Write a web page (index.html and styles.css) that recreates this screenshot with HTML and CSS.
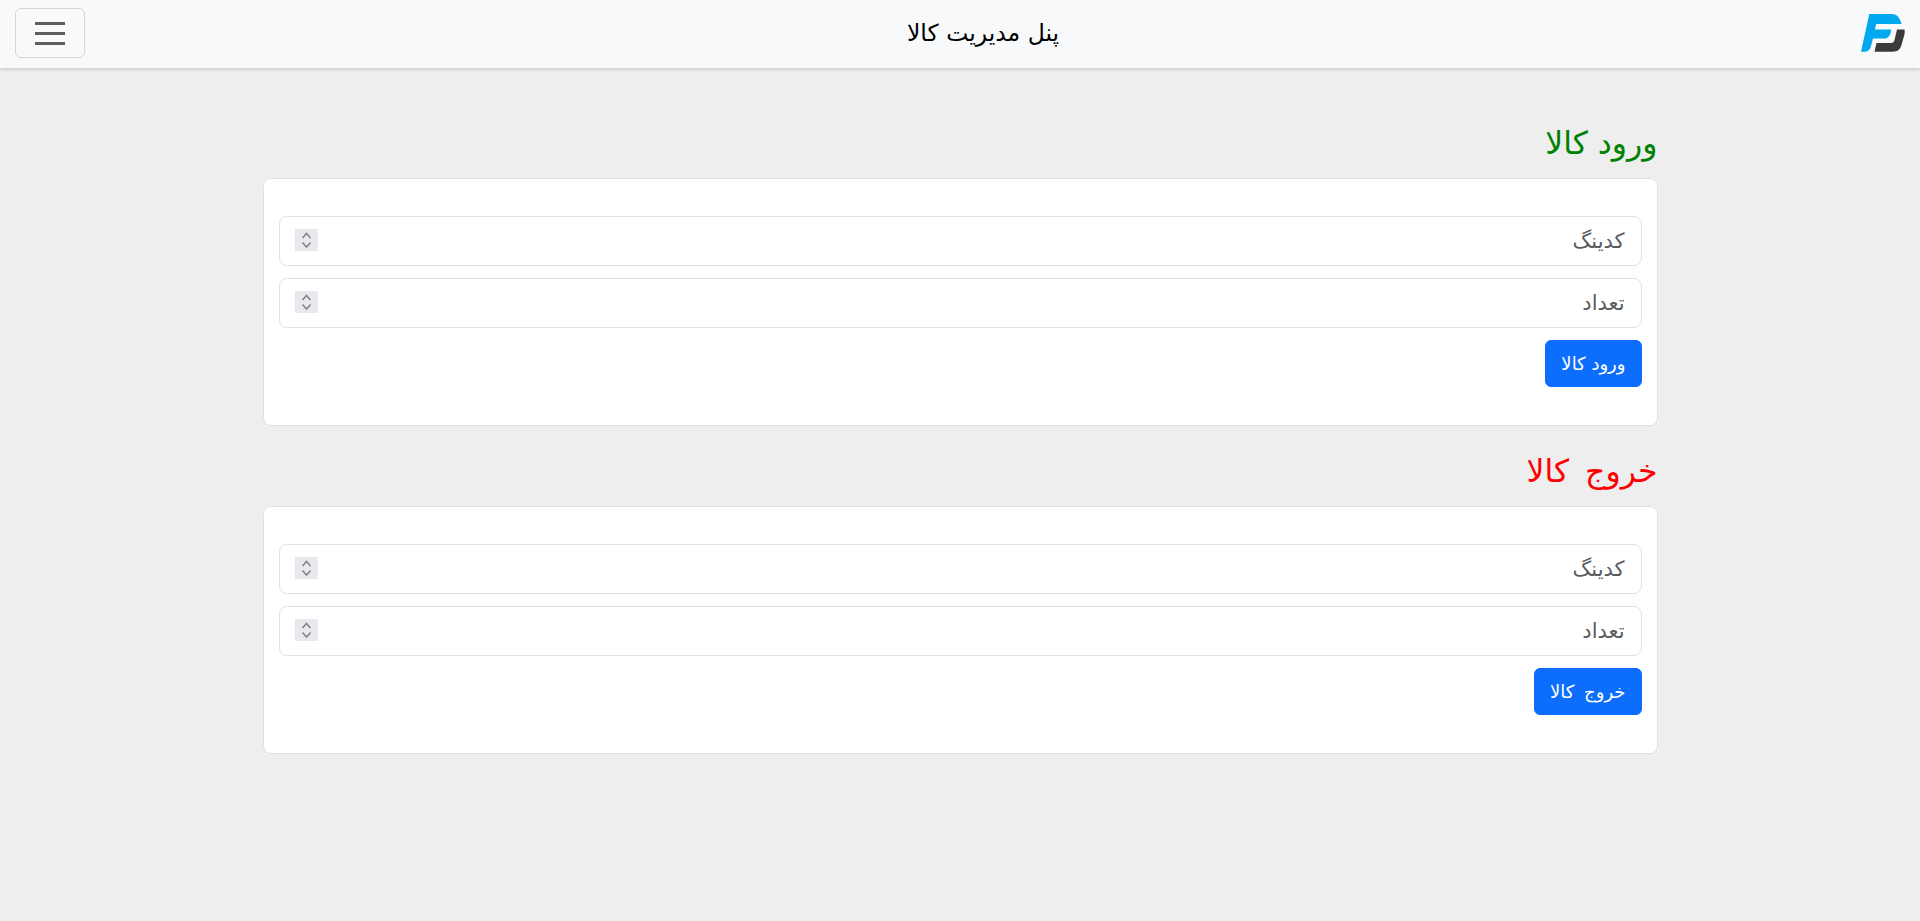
FILE: index.html
```html
<!DOCTYPE html>
<html lang="fa" dir="rtl">
<head>
  <meta charset="UTF-8" />
  <meta name="viewport" content="width=device-width, initial-scale=1.0"/>
  <title>پنل مدیریت کالا</title>
  <link rel="stylesheet" href="styles.css">
</head>
<body>
  <nav class="navbar">
    <svg class="logo" viewBox="0 0 44 38" aria-label="logo">
      <path fill="#3b3b3b" d="M36 15.500H43.500C44 18 43.500 20 43 22L40.500 31C39 36 36 37.700 32 37.700H13.500L15.500 29H30C32 29 33 28 33.500 26Z"/>
      <path fill="#00a8f0" d="M8.300 0H31C36 0 39 4 40.500 10H15L14 15.500H30C30 20 28 24 24 24.500H12L10 32C9 36 7 37.700 4 37.700H0Z"/>
    </svg>
    <h1 class="navbar-title">پنل مدیریت کالا</h1>
    <button class="menu-btn" type="button" aria-label="menu">
      <span></span><span></span><span></span>
    </button>
  </nav>

  <main class="container">
    <h2 class="section-title enter">ورود کالا</h2>
    <form class="card">
      <input class="form-control" type="number" placeholder="کدینگ">
      <input class="form-control" type="number" placeholder="تعداد">
      <button class="btn" type="button">ورود کالا</button>
    </form>

    <h2 class="section-title exit">خروج کالا</h2>
    <form class="card">
      <input class="form-control" type="number" placeholder="کدینگ">
      <input class="form-control" type="number" placeholder="تعداد">
      <button class="btn btn-exit" type="button">خروج کالا</button>
    </form>
  </main>
</body>
</html>
```

FILE: styles.css
```css
* {
  box-sizing: border-box;
}

body {
  margin: 0;
  min-height: 100vh;
  background: #eeeeee;
  font-family: "DejaVu Sans", sans-serif;
  color: #212529;
}

.navbar {
  height: 68px;
  padding: 0 15px 2px;
  display: flex;
  align-items: center;
  justify-content: space-between;
  background: #f8f9fa;
  box-shadow: 0 1px 4px rgba(0, 0, 0, 0.2);
}

.logo {
  width: 44px;
  height: 38px;
}

.navbar-title {
  margin: 0 -20px 0 0;
  font-size: 23.500px;
  font-weight: 400;
  color: #000;
}

.menu-btn {
  width: 70px;
  height: 50px;
  padding: 0;
  display: flex;
  flex-direction: column;
  align-items: center;
  justify-content: center;
  gap: 7px;
  background: transparent;
  border: 1px solid #d3d4d5;
  border-radius: 6px;
}

.menu-btn span {
  width: 30px;
  height: 3px;
  background: #5d5e5f;
}

.container {
  width: 1395px;
  margin: 0 auto;
  padding-top: 50px;
}

.section-title {
  margin: 0 0 10px;
  font-size: 31.500px;
  font-weight: 400;
  line-height: 50px;
}

.enter {
  color: green;
}

.exit {
  color: red;
  word-spacing: 6px;
}

.card {
  height: 248px;
  margin-bottom: 20px;
  padding: 37px 15px 0;
  display: flex;
  flex-direction: column;
  background: #fff;
  border: 1px solid #dee2e6;
  border-radius: 8px;
}

.form-control {
  width: 100%;
  height: 50px;
  margin-bottom: 12px;
  padding: 6px 16px 6px 15px;
  font-family: inherit;
  font-size: 21px;
  color: #212529;
  background: #fff;
  border: 1px solid #dee2e6;
  border-radius: 8px;
}

.form-control::placeholder {
  color: #595c5f;
}

.form-control::-webkit-inner-spin-button {
  -webkit-appearance: none;
  appearance: none;
  opacity: 1;
  width: 23px;
  height: 22px;
  background: #e9e9ed url("data:image/svg+xml,%3Csvg xmlns='http://www.w3.org/2000/svg' width='23' height='22'%3E%3Cpath d='M7.500 9l4-4.500 4 4.500M7.500 13.500l4 4.500 4-4.500' fill='none' stroke='%2380808f' stroke-width='1.500'/%3E%3C/svg%3E") no-repeat center;
}

.btn {
  align-self: flex-start;
  height: 47px;
  padding: 0 15px;
  font-family: inherit;
  font-size: 18px;
  color: #fff;
  background: #0d6efd;
  border: 1px solid #0d6efd;
  border-radius: 6px;
}

.btn-exit {
  word-spacing: 4px;
}
```
